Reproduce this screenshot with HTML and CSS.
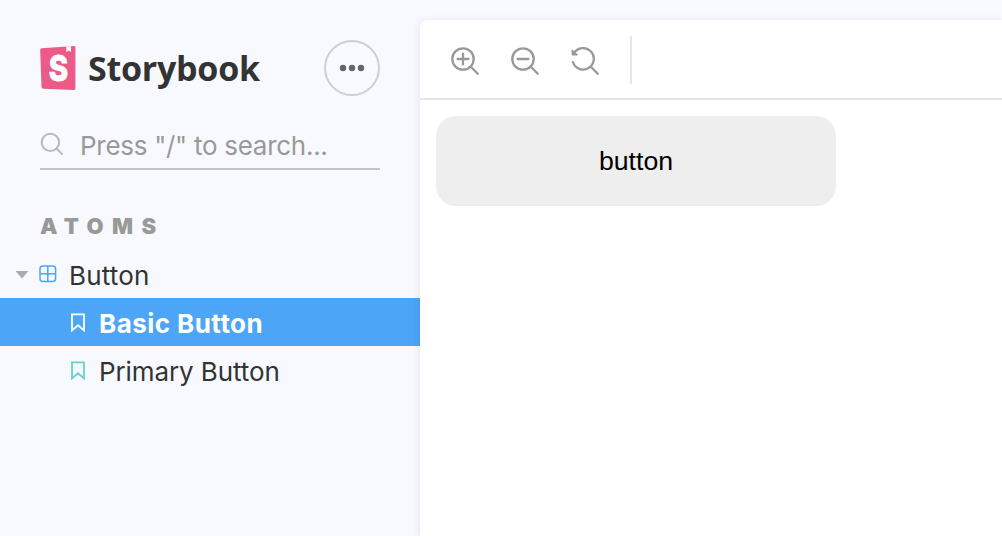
FILE: index.html
```html
<!DOCTYPE html>
<html lang="en">
<head>
<meta charset="utf-8">
<title>Storybook</title>
<link rel="stylesheet" href="styles.css">
</head>
<body>
<div class="app">
  <aside class="sidebar">
    <header class="brand">
      <svg class="logo" width="36" height="45" viewBox="0 0 36 45">
        <path d="M1.8 2.2 34 .1Q35.4 0 35.4 1.5V42.6Q35.4 44.2 33.8 44.1L3.2 42.7Q1.6 42.6 1.5 41L.2 4.1Q.1 2.4 1.8 2.2Z" fill="#ec5a87"/>
        <path d="M26.4.6 31 .3V6L28.7 4.4 26.2 6.2Z" fill="#fff"/>
        <text class="logo-letter" x="8.8" y="34.8" textLength="19.4" lengthAdjust="spacingAndGlyphs">S</text>
      </svg>
      <span class="wordmark">Storybook</span>
      <button class="more" aria-label="Menu">
        <svg width="26" height="8" viewBox="0 0 26 8" fill="#666"><circle cx="4" cy="4" r="3.2"/><circle cx="13" cy="4" r="3.2"/><circle cx="22" cy="4" r="3.2"/></svg>
      </button>
    </header>
    <div class="search">
      <svg width="24" height="24" viewBox="0 0 24 24" fill="none" stroke="#b9babc" stroke-width="2"><circle cx="10.4" cy="10.4" r="8.7"/><path d="m16.5 16.5 5.5 5.5" stroke-linecap="round"/></svg>
      <span class="search-text">Press "/" to search...</span>
    </div>
    <h2 class="heading">ATOMS</h2>
    <nav class="tree">
      <div class="row parent">
        <svg width="14" height="10" viewBox="0 0 14 10"><path d="M.5 2h13L7 9.5Z" fill="#aaabad"/></svg>
        <svg class="component" width="18" height="18" viewBox="0 0 18 18" fill="none" stroke="#4da5f7" stroke-width="1.5"><rect x="1" y="1" width="15.6" height="15.6" rx="3"/><path d="M8.8 1v15.6M1 8.8h15.6"/></svg>
        <span class="label button-label">Button</span>
      </div>
      <div class="row story selected">
        <svg width="16" height="20" viewBox="0 0 16 20" fill="none" stroke="currentColor" stroke-width="1.8"><path d="M2 2.4h12v16L8 13.2 2 18.4Z"/></svg>
        <span class="label basic-label">Basic Button</span>
      </div>
      <div class="row story">
        <svg width="16" height="20" viewBox="0 0 16 20" fill="none" stroke="#66d1d1" stroke-width="1.8"><path d="M2 2.4h12v16L8 13.2 2 18.4Z"/></svg>
        <span class="label primary-label">Primary Button</span>
      </div>
    </nav>
  </aside>
  <main class="preview">
    <div class="toolbar">
      <svg class="tool" viewBox="0 0 30 30"><circle cx="12" cy="12" r="10.7"/><path d="m19.8 19.8 7 7M6.6 12h10.8M12 6.6v10.8"/></svg>
      <svg class="tool" viewBox="0 0 30 30"><circle cx="12" cy="12" r="10.7"/><path d="m19.8 19.8 7 7M6.6 12h10.8"/></svg>
      <svg class="tool" viewBox="0 0 30 30"><path d="m19.8 19.8 7 7M1.9 15A10.7 10.7 0 1 0 3 6.2"/><path class="arrow" d="M1.5 3.7V7.7H5.7Z"/></svg>
      <span class="divider"></span>
    </div>
    <div class="canvas"><button class="demo">button</button></div>
  </main>
</div>
</body>
</html>
```
FILE: styles.css
```css
* { box-sizing: border-box; }
body { margin: 0; background: #f7f9fe; color: #333; font-family: Inter, "Liberation Sans", sans-serif; overflow: hidden; }
button { border: 0; padding: 0; font: inherit; }
svg { display: block; flex: none; }
.app { display: flex; width: 1002px; height: 536px; padding-top: 20px; overflow: hidden; }
.sidebar { width: 420px; flex: none; padding-top: 20px; }
.brand { display: flex; align-items: center; height: 56px; padding: 0 40px; }
.logo { overflow: visible; }
.logo-letter { font: 800 36px Inter, sans-serif; fill: #fff; stroke: #fff; stroke-width: .8px; }
.wordmark { margin-left: 12px; font: 700 34px/56px "Open Sans", sans-serif; letter-spacing: -.25px; white-space: nowrap; }
.more { display: flex; align-items: center; justify-content: center; width: 56px; height: 56px; margin-left: auto; border: 2px solid #cdcfd3; border-radius: 50%; background: transparent; }
.search { display: flex; align-items: center; width: 340px; height: 50px; margin: 24px 40px 0; border-bottom: 2px solid #c3c5ca; }
.search-text { margin-left: 16px; padding-top: 3px; color: #999; font-size: 26px; line-height: 45px; letter-spacing: -.28px; white-space: nowrap; }
.heading { margin: 41px 0 0 40px; height: 30px; color: #999; font-size: 22px; font-weight: 900; line-height: 30px; letter-spacing: 8.4px; }
.tree { margin-top: 9px; }
.row { display: flex; align-items: center; height: 48px; white-space: nowrap; }
.parent { padding-left: 15px; }
.component { margin-left: 10px; }
.story { padding-left: 70px; }
.label { padding-top: 3px; font-size: 26px; line-height: 45px; }
.button-label { margin-left: 12px; letter-spacing: .2px; }
.story .label { margin-left: 13px; }
.selected { background: #4da5f7; color: #fff; }
.selected .label { font-weight: 700; letter-spacing: .45px; }
.primary-label { letter-spacing: -.1px; }
.preview { flex: 1; background: #fff; border-top-left-radius: 8px; box-shadow: 0 2px 10px rgba(0,0,0,.1); }
.toolbar { display: flex; align-items: center; gap: 30px; height: 80px; padding: 2px 0 0 31px; border-bottom: 2px solid #e5e5e5; }
.tool { width: 30px; height: 30px; margin-top: 4px; fill: none; stroke: #999; stroke-width: 2.3; stroke-linecap: round; stroke-linejoin: round; }
.arrow { fill: #999; stroke-width: 1.8; }
.divider { width: 2px; height: 48px; margin-left: -1px; background: #e5e5e5; }
.canvas { padding: 16px; }
.demo { display: block; width: 400px; height: 90px; border-radius: 20px; background: #eee; color: #000; font: 26.67px "Liberation Sans", Arial, sans-serif; }
```
